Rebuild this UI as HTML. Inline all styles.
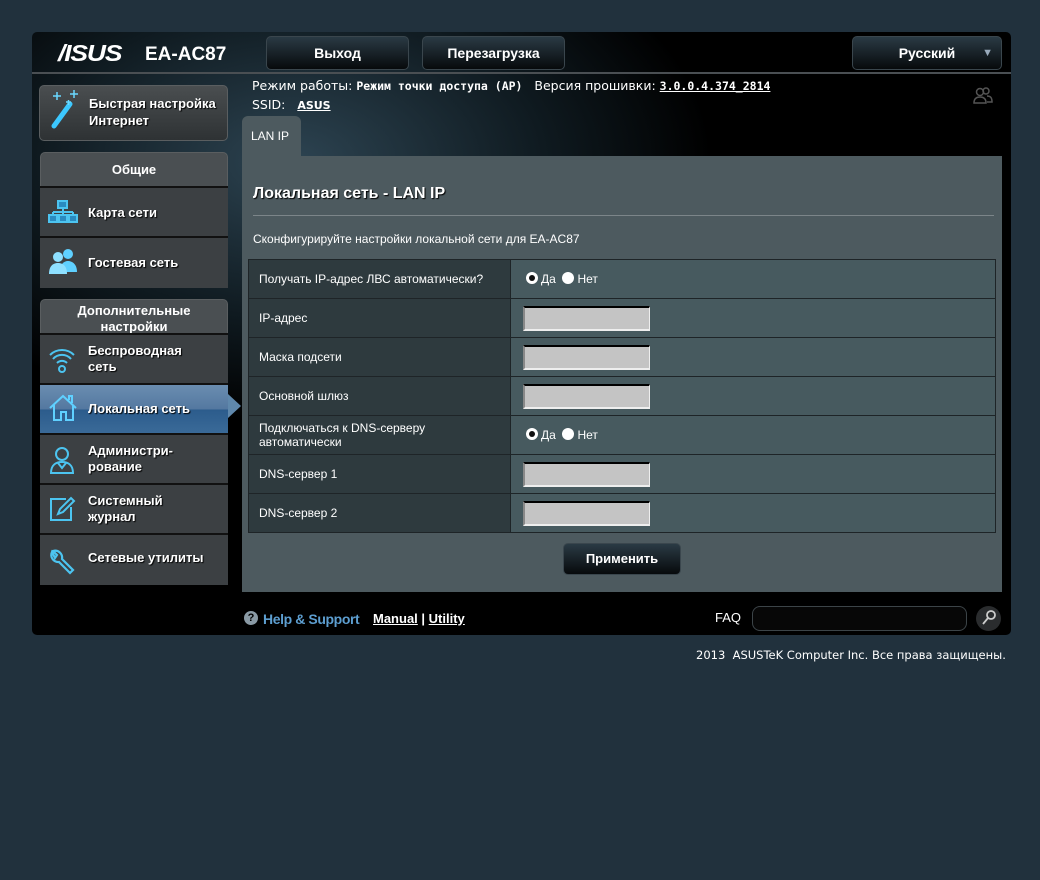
<!DOCTYPE html>
<html><head><meta charset="utf-8"><style>
*{box-sizing:border-box;margin:0;padding:0}
body{width:1040px;height:880px;background:#21313d;font-family:"Liberation Sans",sans-serif;position:relative;overflow:hidden;color:#fff}
.abs{position:absolute}
#wrap{left:32px;top:32px;width:979px;height:603px;border-radius:5px;background:radial-gradient(ellipse 420px 260px at 260px 130px,#2d4452 0%,#0f1a20 60%,#000 100%);overflow:hidden}
#topline{left:32px;top:72px;width:979px;height:2px;background:#4a4f53}
.btn{background:linear-gradient(#2a3a44,#070a0c);border:1px solid #3a464d;border-radius:5px;color:#fff;font-weight:bold;font-size:14px;text-align:center;line-height:32px;height:34px}
.sideitem{left:40px;width:188px;background:#3c4043;border-top:2px solid #111;color:#fff;font-weight:bold;font-size:13px;text-shadow:1px 1px 1px #000}
.sideitem span{position:absolute;left:48px}
.ic{position:absolute;left:8px}
.tbl td{border:1px solid #1e2427;height:39px;font-size:12px;color:#fff}
.tbl td.l{background:#2e3a3e;padding-left:10px;width:262px}
.tbl td.r{background:#475a5f;padding-left:15px}
.inp{width:127px;height:25px;background:#c4c4c4;border-top:2px solid #000;border-left:2px solid #888;border-bottom:2px solid #eee;border-right:1px solid #eee;display:inline-block;vertical-align:middle;margin-left:-3px}
.rad{display:inline-block;width:12px;height:12px;border-radius:50%;background:#fff;vertical-align:-1px;margin-right:3px;position:relative}
.rad.on::after{content:"";position:absolute;left:3px;top:3px;width:6px;height:6px;border-radius:50%;background:#111}
.dv{font-family:"DejaVu Sans",sans-serif}
</style></head><body>
<div id="wrap" class="abs"></div>
<div id="topline" class="abs"></div>
<div class="abs" style="left:58px;top:40px;font-size:23px;font-weight:bold;font-style:italic;letter-spacing:-1px;color:#fff;transform:scaleX(1.15);transform-origin:left">/ISUS</div>
<div class="abs" style="left:145px;top:44px;font-size:19px;font-weight:bold">EA-AC87</div>
<div class="abs btn" style="left:266px;top:36px;width:143px">Выход</div>
<div class="abs btn" style="left:422px;top:36px;width:143px">Перезагрузка</div>
<div class="abs btn" style="left:852px;top:36px;width:150px">Русский<span style="position:absolute;right:8px;top:0;font-size:11px;color:#9ab">▼</span></div>

<div class="abs dv" style="left:252px;top:78px;font-size:12.5px;color:#fff;white-space:nowrap">Режим работы: <b style="font-family:'DejaVu Sans Mono',monospace;font-size:11.5px">Режим точки доступа (AP)</b>&nbsp;&nbsp;&nbsp;Версия прошивки: <b style="font-family:'DejaVu Sans Mono',monospace;font-size:11.5px;text-decoration:underline">3.0.0.4.374_2814</b></div>
<div class="abs dv" style="left:252px;top:97px;font-size:12.5px">SSID:&nbsp;&nbsp;&nbsp;<b style="font-size:11px;text-decoration:underline">ASUS</b></div>
<svg class="abs" style="left:973px;top:87px" width="20" height="18" viewBox="0 0 20 18" fill="none" stroke="#555" stroke-width="1.5"><circle cx="7" cy="5" r="3.5"/><path d="M1 16c0-5 3-6 6-6s6 1 6 6z"/><circle cx="13" cy="4" r="3"/><path d="M14 9c3 0 5 1 5 6h-5"/></svg>

<div class="abs" style="left:39px;top:85px;width:189px;height:56px;border-radius:5px;background:linear-gradient(#4a4e50,#2e3234);border:1px solid #5a5e60"></div>
<svg class="abs" style="left:48px;top:90px" width="36" height="40" viewBox="0 0 36 40"><path d="M6 36L22 14" stroke="#3cc8ff" stroke-width="5" stroke-linecap="round"/><path d="M5 6h8M9 2v8M22 4h8M26 0v8M18 12h5M20.5 10v5" stroke="#6ad8ff" stroke-width="1.5"/></svg>
<div class="abs" style="left:89px;top:95px;font-size:13px;font-weight:bold;line-height:17px;text-shadow:1px 1px 1px #000">Быстрая настройка<br>Интернет</div>

<div class="abs" style="left:40px;top:152px;width:188px;height:136px;border-radius:5px 5px 0 0;background:#4a4f52;border:1px solid #5a5e60"></div>
<div class="abs" style="left:40px;top:162px;width:188px;text-align:center;font-weight:bold;font-size:13px">Общие</div>
<div class="abs sideitem" style="top:186px;height:50px"><svg class="ic" style="top:12px" width="30" height="24" viewBox="0 0 30 24" fill="none" stroke="#4cc4f0" stroke-width="2"><rect x="10" y="1" width="9" height="7" fill="#2a8bc0"/><path d="M15 8v4M5 12h20M5 12v3M25 12v3M15 12v3"/><rect x="1" y="15" width="8" height="7" fill="#2a8bc0"/><rect x="11" y="15" width="8" height="7" fill="#2a8bc0"/><rect x="21" y="15" width="8" height="7" fill="#2a8bc0"/></svg><span style="top:17px">Карта сети</span></div>
<div class="abs sideitem" style="top:236px;height:52px"><svg class="ic" style="top:10px" width="30" height="26" viewBox="0 0 30 26" fill="#5fd0ff"><circle cx="20" cy="6" r="5"/><path d="M12 24c0-8 4-11 8-11s9 3 9 11z"/><circle cx="10" cy="9" r="5" fill="#8ee0ff"/><path d="M1 26c0-8 4-11 9-11s9 3 9 11z" fill="#8ee0ff"/></svg><span style="top:17px">Гостевая сеть</span></div>

<div class="abs" style="left:40px;top:299px;width:188px;height:286px;border-radius:5px 5px 0 0;background:#4a4f52;border:1px solid #5a5e60"></div>
<div class="abs" style="left:40px;top:303px;width:188px;text-align:center;font-weight:bold;font-size:13px;line-height:16px">Дополнительные<br>настройки</div>
<div class="abs sideitem" style="top:333px;height:50px"><svg class="ic" style="top:12px" width="28" height="26" viewBox="0 0 28 26" fill="none" stroke="#4cc4f0" stroke-width="2"><path d="M2 8a17 17 0 0 1 24 0M5 12a12 12 0 0 1 18 0M9 16a7 7 0 0 1 10 0"/><circle cx="14" cy="22" r="3"/></svg><span style="top:8px;line-height:16px">Беспроводная<br>сеть</span></div>
<div class="abs sideitem" style="top:383px;height:50px;background:linear-gradient(#6a8db0,#5478a0 50%,#2c5c8c 52%,#3a6a98)"><svg class="ic" style="top:8px" width="30" height="30" viewBox="0 0 30 30" fill="none" stroke="#5fd0ff" stroke-width="2"><path d="M2 15L15 3l13 12M6 12v15h7v-8h5v8h7V12M21 7V3h3v7"/></svg><span style="top:16px">Локальная сеть</span></div>
<div class="abs" style="left:228px;top:394px;width:0;height:0;border-top:12px solid transparent;border-bottom:12px solid transparent;border-left:13px solid #5f88ac"></div>
<div class="abs sideitem" style="top:433px;height:50px"><svg class="ic" style="top:10px" width="28" height="30" viewBox="0 0 28 30" fill="none" stroke="#4cc4f0" stroke-width="2"><circle cx="14" cy="9" r="6"/><path d="M3 28c0-8 5-11 11-11s11 3 11 11zM10 18l4 5 4-5"/></svg><span style="top:8px;line-height:16px">Администри-<br>рование</span></div>
<div class="abs sideitem" style="top:483px;height:50px"><svg class="ic" style="top:10px" width="28" height="28" viewBox="0 0 28 28" fill="none" stroke="#4cc4f0" stroke-width="2"><path d="M18 4H3v21h20V12"/><path d="M10 19l2-5 11-11 3 3-11 11z"/></svg><span style="top:8px;line-height:16px">Системный<br>журнал</span></div>
<div class="abs sideitem" style="top:533px;height:52px"><svg class="ic" style="top:12px" width="28" height="28" viewBox="0 0 28 28" fill="none" stroke="#4cc4f0" stroke-width="2.2"><path d="M4 5a7 7 0 0 0 7 10l11 11 3-3-11-11A7 7 0 0 0 5 4l4 4-2 3z"/></svg><span style="top:15px">Сетевые утилиты</span></div>

<div class="abs" style="left:242px;top:116px;width:59px;height:42px;background:#4d5a5f;border-radius:6px 6px 0 0;font-size:12px;padding:13px 0 0 9px">LAN IP</div>
<div class="abs" style="left:242px;top:156px;width:760px;height:436px;background:#4d5a5f"></div>
<div class="abs" style="left:253px;top:185px;font-size:16px;font-weight:bold;text-shadow:1px 1px 1px #000">Локальная сеть - LAN IP</div>
<div class="abs" style="left:253px;top:215px;width:741px;height:1px;background:#7c8589"></div>
<div class="abs" style="left:253px;top:232px;font-size:12px">Сконфигурируйте настройки локальной сети для EA-AC87</div>
<table class="abs tbl" style="left:248px;top:259px;width:748px;border-collapse:collapse">
<tr><td class="l">Получать IP-адрес ЛВС автоматически?</td><td class="r"><span class="rad on"></span>Да&nbsp;&nbsp;<span class="rad"></span>Нет</td></tr>
<tr><td class="l">IP-адрес</td><td class="r"><span class="inp"></span></td></tr>
<tr><td class="l">Маска подсети</td><td class="r"><span class="inp"></span></td></tr>
<tr><td class="l">Основной шлюз</td><td class="r"><span class="inp"></span></td></tr>
<tr><td class="l" style="line-height:14px">Подключаться к DNS-серверу<br>автоматически</td><td class="r"><span class="rad on"></span>Да&nbsp;&nbsp;<span class="rad"></span>Нет</td></tr>
<tr><td class="l">DNS-сервер 1</td><td class="r"><span class="inp"></span></td></tr>
<tr><td class="l">DNS-сервер 2</td><td class="r"><span class="inp"></span></td></tr>
</table>
<div class="abs btn" style="left:563px;top:543px;width:118px;height:32px;line-height:30px;font-size:13px">Применить</div>

<div class="abs" style="left:244px;top:611px;width:14px;height:14px;border-radius:50%;background:#8a9aa5;color:#000;font-size:11px;font-weight:bold;text-align:center;line-height:14px">?</div>
<div class="abs" style="left:263px;top:611px;font-size:14px;font-weight:bold;color:#5d9ed0;letter-spacing:-0.4px">Help &amp; Support</div>
<div class="abs" style="left:373px;top:611px;font-size:13px;font-weight:bold"><u>Manual</u> | <u>Utility</u></div>
<div class="abs" style="left:715px;top:610px;font-size:13px">FAQ</div>
<div class="abs" style="left:752px;top:606px;width:215px;height:25px;border:1px solid #3c4448;border-radius:8px;background:#070707"></div>
<div class="abs" style="left:976px;top:606px;width:25px;height:25px;border-radius:50%;background:#2a2c2e"></div>
<svg class="abs" style="left:981px;top:609px" width="16" height="18" viewBox="0 0 16 18" fill="none" stroke="#ccc" stroke-width="1.8"><circle cx="10" cy="6" r="4"/><path d="M7 9l-5 6"/></svg>
<div class="abs dv" style="left:696px;top:648px;font-size:11.5px;color:#fff;white-space:nowrap">2013&nbsp; ASUSTeK Computer Inc. Все права защищены.</div>
</body></html>
